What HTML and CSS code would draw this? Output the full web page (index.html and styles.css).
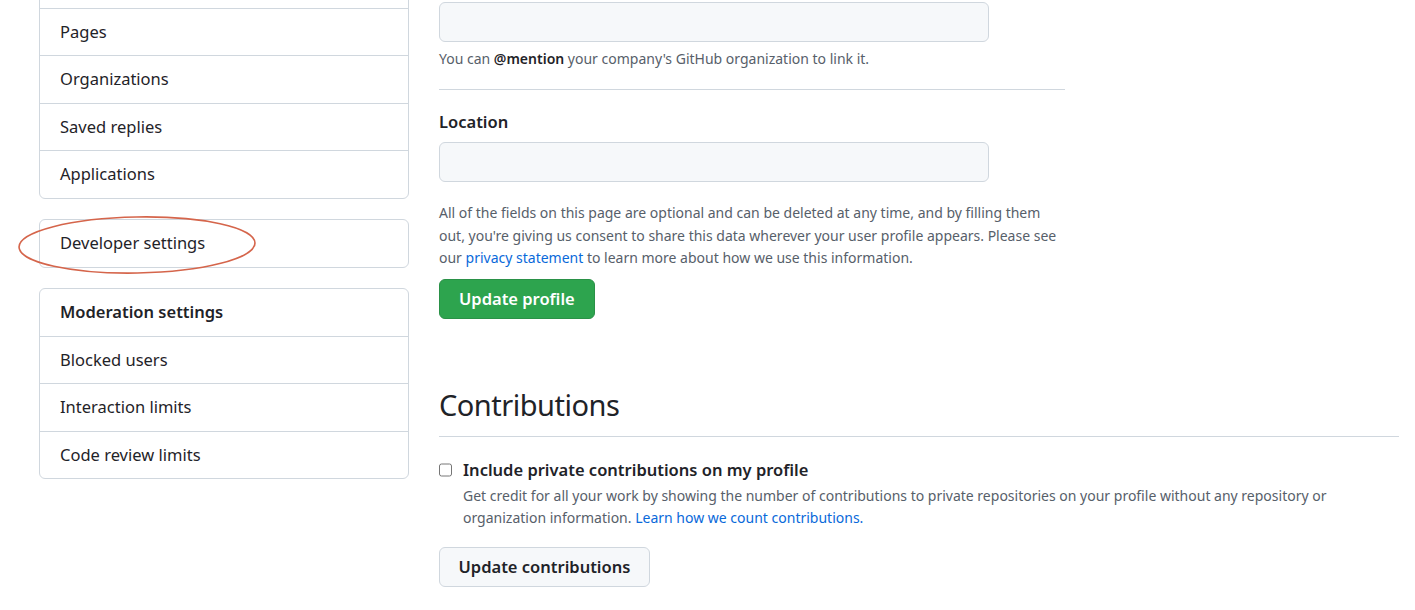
FILE: index.html
```html
<!DOCTYPE html>
<html lang="en">
<head>
  <meta charset="UTF-8">
  <meta name="viewport" content="width=device-width, initial-scale=1.0">
  <title>Public profile</title>
  <link rel="stylesheet" href="styles.css">
</head>
<body>
  <div class="page">
    <!-- Settings sidebar -->
    <nav class="sidebar">
      <div class="menu">
        <a class="menu-item" href="#">Packages</a>
        <a class="menu-item" href="#">Pages</a>
        <a class="menu-item" href="#">Organizations</a>
        <a class="menu-item" href="#">Saved replies</a>
        <a class="menu-item" href="#">Applications</a>
      </div>

      <div class="menu dev-menu">
        <a class="menu-item" href="#">Developer settings</a>
        <svg class="circle-mark" width="244" height="64" viewBox="0 0 244 64">
          <ellipse cx="120" cy="31" rx="118" ry="28" fill="none" stroke="#d5654b" stroke-width="1.6" transform="rotate(-1 120 31)"/>
        </svg>
      </div>

      <div class="menu">
        <div class="menu-heading">Moderation settings</div>
        <a class="menu-item" href="#">Blocked users</a>
        <a class="menu-item" href="#">Interaction limits</a>
        <a class="menu-item" href="#">Code review limits</a>
      </div>
    </nav>

    <!-- Main settings -->
    <main class="content">
      <form class="profile-form">
        <input class="form-control" type="text">
        <p class="note">You can <strong>@mention</strong> your company's GitHub organization to link it.</p>

        <hr class="form-divider">

        <label class="form-label" for="location">Location</label>
        <input class="form-control" type="text" id="location">

        <p class="note legal">All of the fields on this page are optional and can be deleted at any time, and by filling them out, you're giving us consent to share this data wherever your user profile appears. Please see our <a href="#">privacy statement</a> to learn more about how we use this information.</p>

        <button type="button" class="btn btn-primary">Update profile</button>
      </form>

      <h2 class="section-title">Contributions</h2>

      <div class="check-row">
        <input type="checkbox" id="private-contribs">
        <div>
          <label for="private-contribs">Include private contributions on my profile</label>
          <p class="check-note">Get credit for all your work by showing the number of contributions to private repositories on your profile without any repository or organization information. <a href="#">Learn how we count contributions.</a></p>
        </div>
      </div>

      <button type="button" class="btn">Update contributions</button>
    </main>
  </div>
</body>
</html>
```

FILE: styles.css
```css
/* General styling */
body {
  margin: 0;
  font-family: "Noto Sans", "Open Sans", sans-serif;
  color: #1f2328;
  background: #fff;
  overflow: hidden;
}

a {
  color: #0969da;
  text-decoration: none;
}

.page {
  display: flex;
  align-items: flex-start;
  gap: 30px;
  padding: 0 16px 0 39px;
}

/* Sidebar */
.sidebar {
  width: 370px;
  flex-shrink: 0;
  display: flex;
  flex-direction: column;
  gap: 20.5px;
  margin-top: -40px;
}

.menu {
  border: 1px solid #d0d7de;
  border-radius: 6px;
}

.dev-menu {
  position: relative;
}

.menu-item, .menu-heading {
  display: block;
  padding: 11px 20px;
  font-size: 16.5px;
  line-height: 24.5px;
  color: #1f2328;
  border-top: 1px solid #d0d7de;
}

.menu > :first-child {
  border-top: none;
}

.menu-heading {
  font-weight: 600;
}

.circle-mark {
  position: absolute;
  left: -23px;
  top: -6px;
  pointer-events: none;
}

/* Main content */
.content {
  flex: 1;
  padding-top: 2px;
}

.profile-form {
  width: 626px;
}

.form-control {
  display: block;
  box-sizing: border-box;
  width: 550px;
  height: 40px;
  margin: 0;
  background: #f6f8fa;
  border: 1px solid #d0d7de;
  border-radius: 6px;
}

.note {
  margin: 6px 0 0;
  font-size: 14px;
  line-height: 21px;
  color: #57606a;
}

.note strong {
  color: #1f2328;
  font-weight: 600;
}

.form-divider {
  border: none;
  border-top: 1px solid #d0d7de;
  margin: 20px 0 20px;
}

.form-label {
  display: block;
  font-size: 16.5px;
  font-weight: 600;
  line-height: 24px;
  margin-bottom: 8px;
}

.legal {
  margin-top: 20px;
  line-height: 22.5px;
}

.btn {
  display: block;
  height: 40px;
  padding: 0 18.5px;
  font-family: inherit;
  font-size: 16.5px;
  font-weight: 600;
  color: #1f2328;
  background: #f6f8fa;
  border: 1px solid #d0d7de;
  border-radius: 6px;
  cursor: pointer;
}

.btn-primary {
  margin-top: 9px;
  padding: 0 19px;
  color: #fff;
  background: #2da44e;
  border-color: #2a9147;
}

.section-title {
  margin: 65px 0 0;
  padding-bottom: 10px;
  font-size: 29px;
  font-weight: 400;
  letter-spacing: -0.5px;
  line-height: 42px;
  border-bottom: 1px solid #d0d7de;
}

.check-row {
  display: flex;
  gap: 11px;
  margin-top: 21px;
}

.check-row input {
  margin: 5px 0 0;
  width: 14px;
  height: 14px;
}

.check-row label {
  display: block;
  font-size: 16.5px;
  font-weight: 600;
  line-height: 24px;
  margin-bottom: 3px;
}

.check-note {
  margin: 0;
  font-size: 14px;
  line-height: 22px;
  color: #57606a;
}

.check-row + .btn {
  margin-top: 18px;
}
```
